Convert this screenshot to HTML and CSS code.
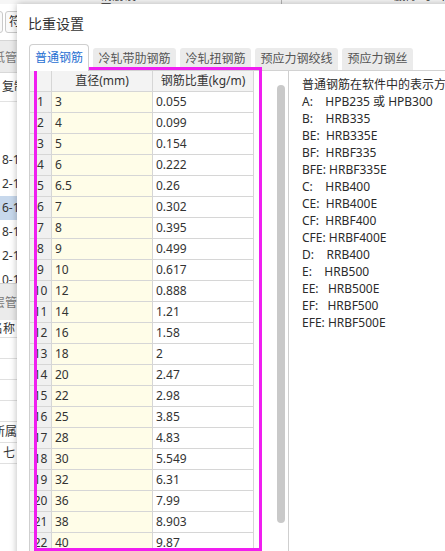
FILE: index.html
```html
<!DOCTYPE html>
<html lang="zh">
<head>
<meta charset="utf-8">
<title>比重设置</title>
<link rel="stylesheet" href="styles.css">
</head>
<body>
<div class="app">
  <div class="app-top">
    <span class="app-title">钢筋设置</span>
    <span class="app-sep"></span>
    <span class="app-del">删除 导出</span>
  </div>
  <div class="toolbar">
    <span class="tb-btn tb-btn1"></span>
    <span class="tb-btn tb-btn2">符号</span>
  </div>
  <div class="band band1">图纸管理</div>
  <div class="plain">复制</div>
  <div class="list">
    <div class="li">8-10</div>
    <div class="li">2-10</div>
    <div class="li sel">6-10</div>
    <div class="li">8-10</div>
    <div class="li">2-10</div>
    <div class="li">0-10</div>
  </div>
  <div class="band band2">图层管理</div>
  <div class="rows">
    <div class="r r-first">名称</div>
    <div class="r"></div>
    <div class="r"></div>
    <div class="r"></div>
    <div class="r"></div>
    <div class="r r-cut">所属</div>
    <div class="r">七</div>
  </div>
</div>

<div class="dialog">
  <div class="dlg-title">比重设置</div>
  <div class="tabs">
    <span class="tab active">普通钢筋</span>
    <span class="tab">冷轧带肋钢筋</span>
    <span class="tab">冷轧扭钢筋</span>
    <span class="tab">预应力钢绞线</span>
    <span class="tab">预应力钢丝</span>
  </div>
  <div class="panel">
    <div class="grid">
      <div class="table">
        <div class="row head"><span class="rn"></span><span class="c">直径(mm)</span><span class="c">钢筋比重(kg/m)</span></div>
        <div class="row"><span class="rn">1</span><span class="c d">3</span><span class="c">0.055</span></div>
        <div class="row"><span class="rn">2</span><span class="c d">4</span><span class="c">0.099</span></div>
        <div class="row"><span class="rn">3</span><span class="c d">5</span><span class="c">0.154</span></div>
        <div class="row"><span class="rn">4</span><span class="c d">6</span><span class="c">0.222</span></div>
        <div class="row"><span class="rn">5</span><span class="c d">6.5</span><span class="c">0.26</span></div>
        <div class="row"><span class="rn">6</span><span class="c d">7</span><span class="c">0.302</span></div>
        <div class="row"><span class="rn">7</span><span class="c d">8</span><span class="c">0.395</span></div>
        <div class="row"><span class="rn">8</span><span class="c d">9</span><span class="c">0.499</span></div>
        <div class="row"><span class="rn">9</span><span class="c d">10</span><span class="c">0.617</span></div>
        <div class="row"><span class="rn">10</span><span class="c d">12</span><span class="c">0.888</span></div>
        <div class="row"><span class="rn">11</span><span class="c d">14</span><span class="c">1.21</span></div>
        <div class="row"><span class="rn">12</span><span class="c d">16</span><span class="c">1.58</span></div>
        <div class="row"><span class="rn">13</span><span class="c d">18</span><span class="c">2</span></div>
        <div class="row"><span class="rn">14</span><span class="c d">20</span><span class="c">2.47</span></div>
        <div class="row"><span class="rn">15</span><span class="c d">22</span><span class="c">2.98</span></div>
        <div class="row"><span class="rn">16</span><span class="c d">25</span><span class="c">3.85</span></div>
        <div class="row"><span class="rn">17</span><span class="c d">28</span><span class="c">4.83</span></div>
        <div class="row"><span class="rn">18</span><span class="c d">30</span><span class="c">5.549</span></div>
        <div class="row"><span class="rn">19</span><span class="c d">32</span><span class="c">6.31</span></div>
        <div class="row"><span class="rn">20</span><span class="c d">36</span><span class="c">7.99</span></div>
        <div class="row"><span class="rn">21</span><span class="c d">38</span><span class="c">8.903</span></div>
        <div class="row"><span class="rn">22</span><span class="c d">40</span><span class="c">9.87</span></div>
      </div>
      <div class="vscroll"><div class="thumb"></div></div>
    </div>
    <div class="notes">普通钢筋在软件中的表示方法：
A:    HPB235 或 HPB300
B:    HRB335
BE:  HRB335E
BF:  HRBF335
BFE: HRBF335E
C:    HRB400
CE:  HRB400E
CF:  HRBF400
CFE: HRBF400E
D:    RRB400
E:    HRB500
EE:   HRB500E
EF:   HRBF500
EFE: HRBF500E</div>
  </div>
</div>

<div class="highlight"></div>
</body>
</html>
```

FILE: styles.css
```css
html, body {
  margin: 0;
  padding: 0;
}
body {
  width: 445px;
  height: 551px;
  overflow: hidden;
  position: relative;
  background: #ffffff;
  font-family: "Noto Sans", "Noto Sans CJK SC", sans-serif;
  font-size: 12px;
  color: #333333;
}

/* ---------- background application window ---------- */
.app {
  display: flex;
  flex-direction: column;
  height: 551px;
}
.app-top {
  height: 4px;
  overflow: hidden;
  background: #f6f6f6;
  display: flex;
  align-items: flex-start;
  flex-shrink: 0;
}
.app-title {
  margin-left: 100px;
  margin-top: -11px;
  line-height: 14px;
  color: #333;
}
.app-sep {
  margin-left: 144px;
  width: 1px;
  height: 4px;
  background: #b5b5b5;
}
.app-del {
  margin-left: 112px;
  margin-top: -11px;
  line-height: 14px;
  color: #333;
  white-space: nowrap;
}
.toolbar {
  height: 36px;
  flex-shrink: 0;
  display: flex;
  align-items: center;
  border-bottom: 1px solid #d6d6d6;
  background: #fff;
}
.tb-btn {
  box-sizing: border-box;
  height: 22px;
  border: 1px solid #cacaca;
  border-radius: 3px;
  background: #fafafa;
  line-height: 20px;
  white-space: nowrap;
}
.tb-btn1 {
  width: 20px;
  margin-left: -17px;
}
.tb-btn2 {
  margin-left: 2px;
  padding: 0 3px;
}
.band {
  flex-shrink: 0;
  background: #ebebeb;
  color: #7a7a7a;
  text-indent: -19px;
  white-space: nowrap;
}
.band1 {
  height: 31px;
  line-height: 33px;
}
.plain {
  flex-shrink: 0;
  height: 28px;
  line-height: 28px;
  padding-left: 2px;
  border-top: 1px solid #d8d8d8;
  border-bottom: 1px solid #e2e2e2;
}
.list {
  flex-shrink: 0;
  box-sizing: border-box;
  height: 181px;
  padding-top: 46px;
  overflow: hidden;
}
.li {
  height: 24px;
  line-height: 24px;
  padding-left: 2px;
}
.li.sel {
  background: #c7d8ec;
}
.band2 {
  height: 36px;
  line-height: 38px;
  border-top: 1px solid #d0d0d0;
}
.rows {
  flex-shrink: 0;
}
.r {
  height: 20px;
  line-height: 20px;
  border-bottom: 1px solid #e0e0e0;
  padding-left: 3px;
  white-space: nowrap;
}
.r-first {
  height: 17px;
  line-height: 17px;
  text-indent: -12px;
}
.r-cut {
  text-indent: -10px;
}

/* ---------- dialog ---------- */
.dialog {
  position: absolute;
  left: 17px;
  top: 4px;
  width: 450px;
  height: 560px;
  background: #ffffff;
  box-shadow: 0 0 7px rgba(0, 0, 0, 0.28);
  display: flex;
  flex-direction: column;
}
.dlg-title {
  padding: 10px 0 0 11px;
  font-size: 14px;
  line-height: 20px;
  color: #333;
}
.tabs {
  margin-top: 10px;
  padding-left: 12px;
  height: 26px;
  display: flex;
  align-items: flex-end;
  gap: 4px;
}
.tab {
  box-sizing: border-box;
  height: 22px;
  line-height: 21px;
  padding: 0 5.5px;
  background: #ebebeb;
  color: #555;
  border-radius: 3px 3px 0 0;
  white-space: nowrap;
}
.tab.active {
  height: 26px;
  line-height: 25px;
  padding: 0 5px;
  background: #ffffff;
  color: #1f6fd2;
  border: 1px solid #cfcfcf;
  border-bottom: none;
  border-radius: 4px 4px 0 0;
  position: relative;
  z-index: 1;
  margin-bottom: -1px;
  height: 27px;
}
.panel {
  margin-left: 12px;
  border-top: 1px solid #d2d2d2;
  display: flex;
  flex: 1;
}
.grid {
  box-sizing: border-box;
  width: 259px;
  border-left: 1px solid #cfcfcf;
  display: flex;
}
.table {
  width: 224px;
}
.row {
  display: grid;
  grid-template-columns: 22px 101px 101px;
  height: 21px;
}
.row > span {
  box-sizing: border-box;
  border-right: 1px solid #d6d6d6;
  border-bottom: 1px solid #d6d6d6;
  line-height: 20px;
  white-space: nowrap;
  overflow: hidden;
}
.rn {
  background: #f0f0f0;
  text-align: center;
}
.c {
  padding-left: 3px;
  background: #ffffff;
}
.c.d {
  background: #fffde8;
}
.head > span {
  background: #f3f3f3;
  text-align: center;
  padding-left: 0;
}
.vscroll {
  flex: 1;
  padding-left: 23px;
  padding-top: 14px;
}
.thumb {
  width: 8px;
  height: 438px;
  border-radius: 4px;
  background: #c9c9c9;
}
.notes {
  flex: 1;
  border-left: 1px solid #cfcfcf;
  padding: 5px 0 0 13px;
  line-height: 17px;
  white-space: pre;
  overflow: hidden;
  color: #2b2b2b;
}

/* ---------- annotation highlight ---------- */
.highlight {
  position: absolute;
  left: 34px;
  top: 67px;
  width: 228px;
  height: 484px;
  box-sizing: border-box;
  border: 3px solid #f01ef0;
}
```
